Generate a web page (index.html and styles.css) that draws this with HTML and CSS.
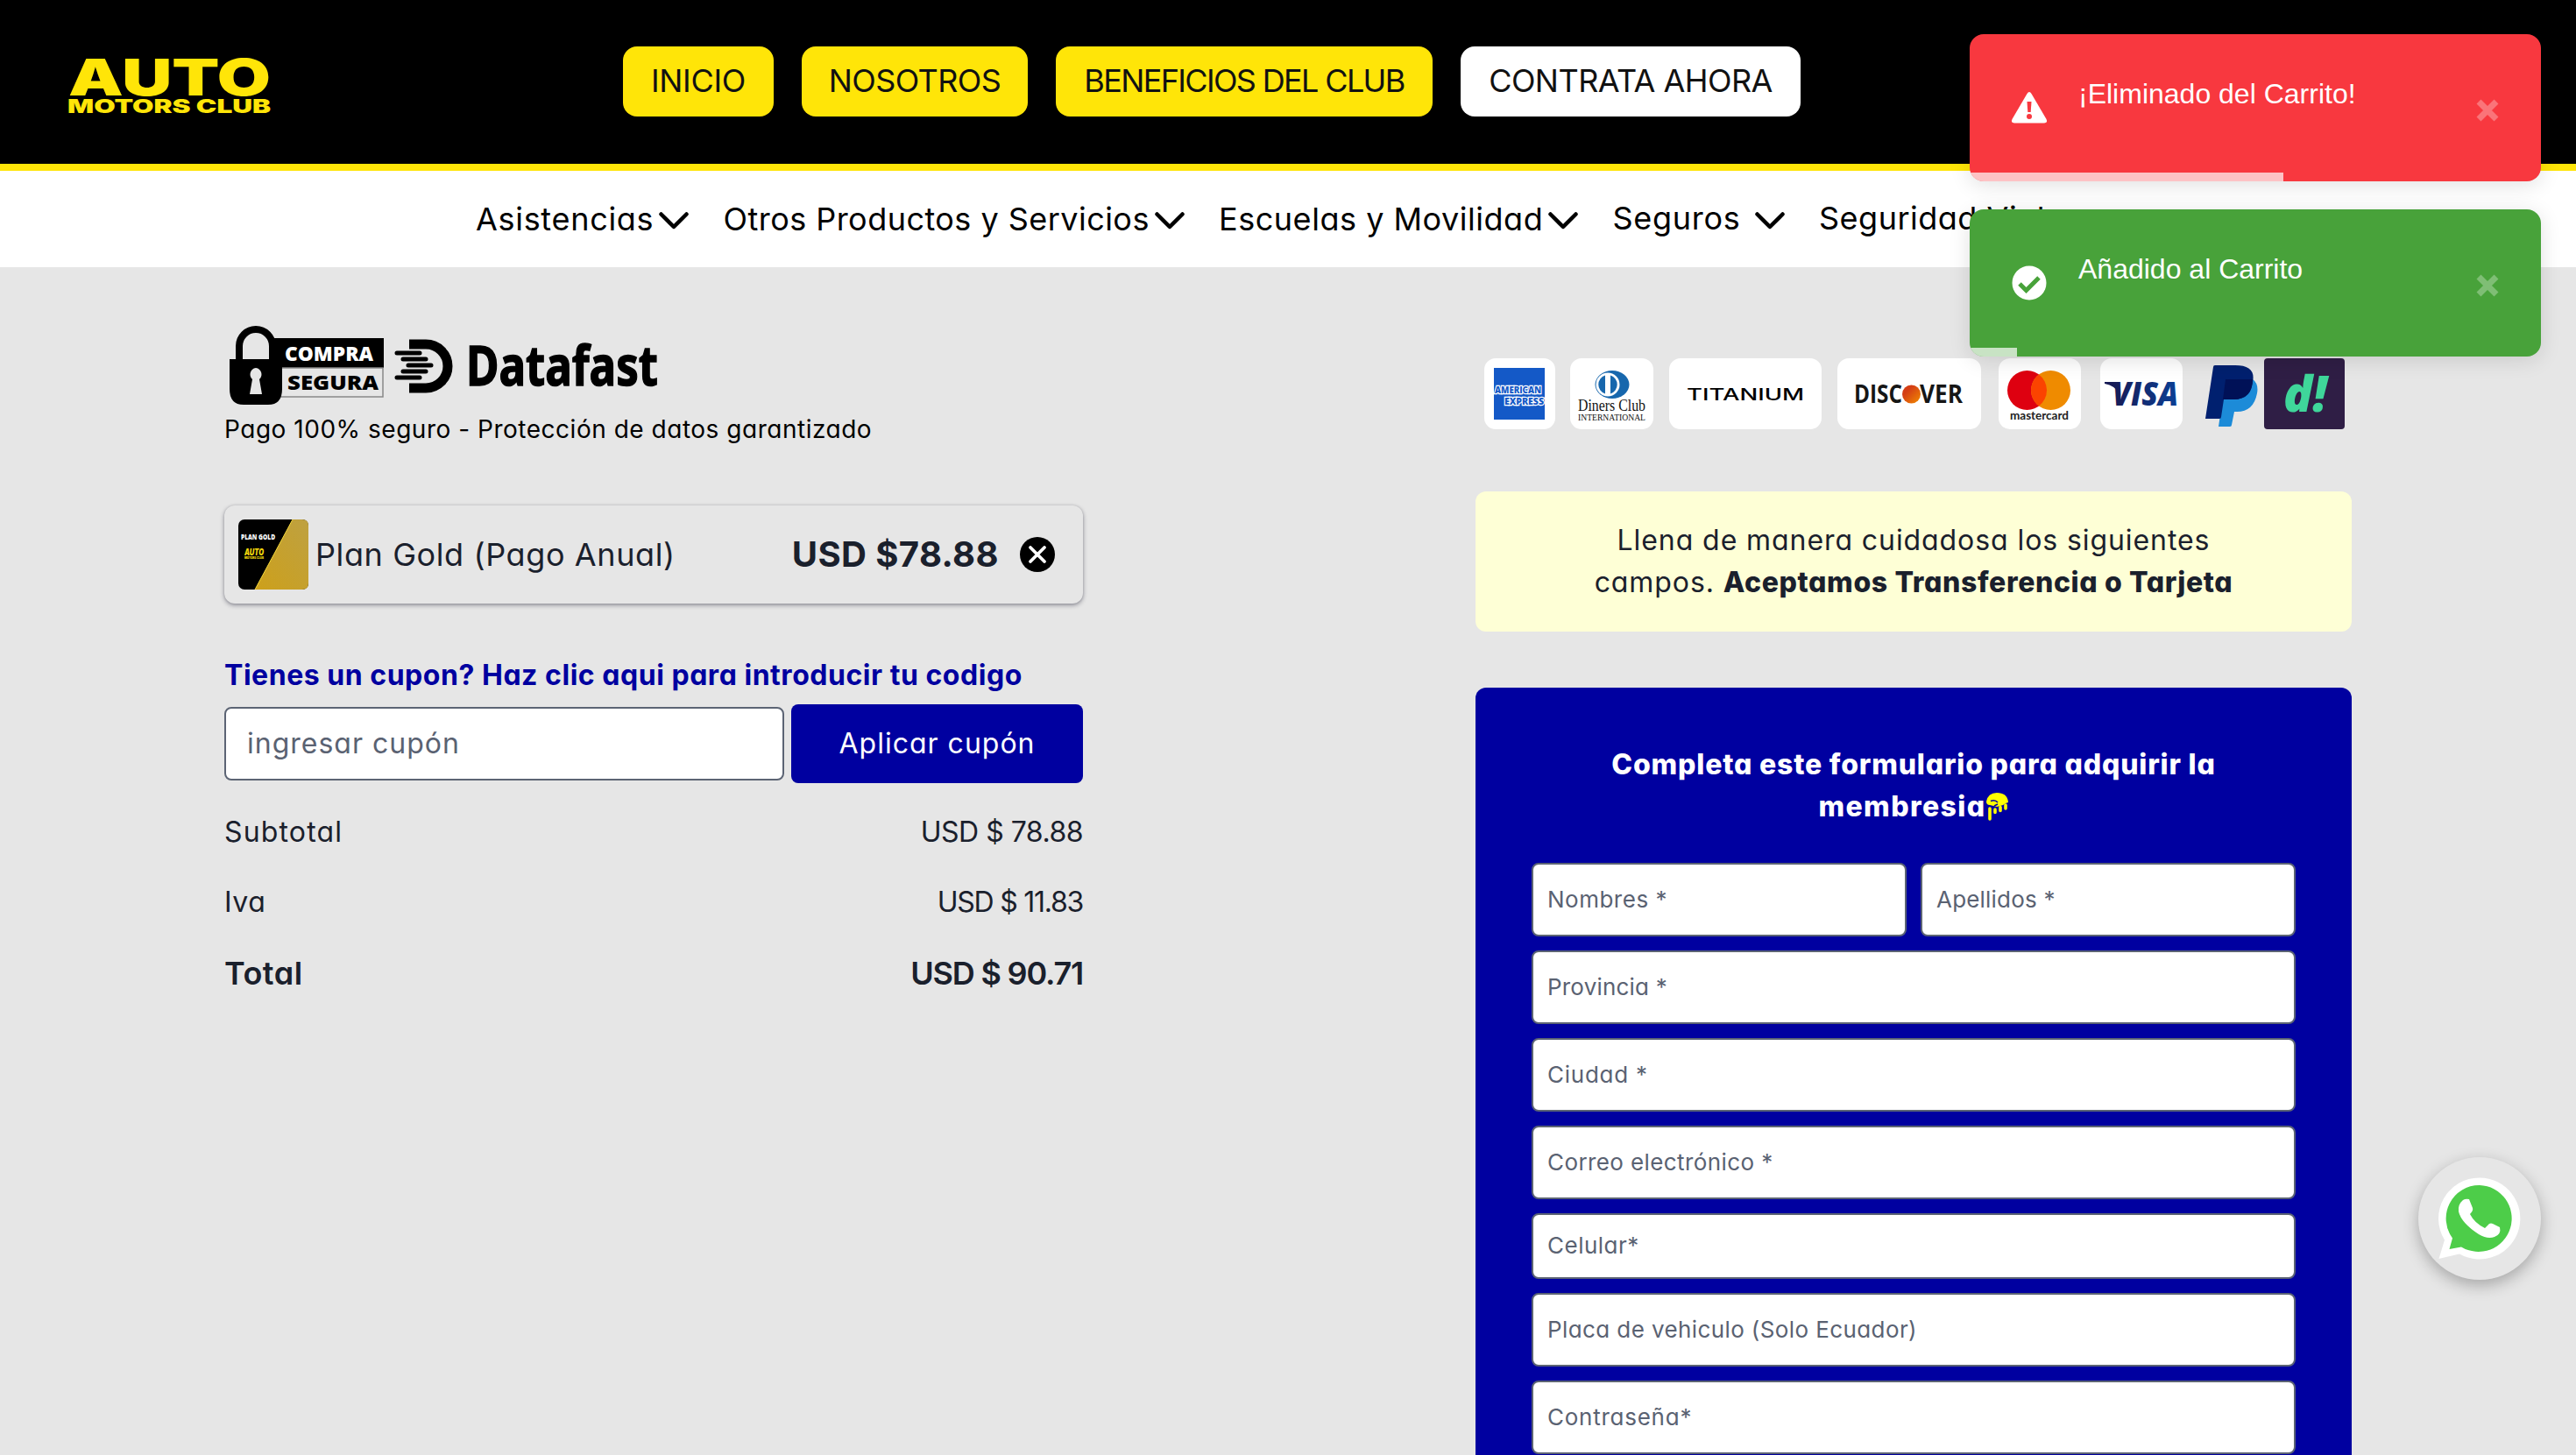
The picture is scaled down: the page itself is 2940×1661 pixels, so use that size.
FILE: index.html
```
<!DOCTYPE html>
<html lang="es">
<head>
<meta charset="utf-8">
<title>Auto Motors Club</title>
<link rel="stylesheet" href="styles.css">
</head>
<body>
<header class="header">
  <svg class="logo" viewBox="0 0 234 64" role="img">
    <g class="logo-text">
      <text x="1" y="43" font-size="58" textLength="231" lengthAdjust="spacingAndGlyphs">AUTO</text>
      <text x="0" y="63" font-size="22" textLength="232" lengthAdjust="spacingAndGlyphs">MOTORS CLUB</text>
    </g>
  </svg>
  <nav class="main-nav">
    <a class="pill w-ini"><span>INICIO</span></a>
    <a class="pill w-nos"><span>NOSOTROS</span></a>
    <a class="pill w-ben"><span>BENEFICIOS DEL CLUB</span></a>
    <a class="pill pill-white w-con"><span>CONTRATA AHORA</span></a>
  </nav>
</header>
<nav class="subnav">
  <a class="s-asi"><span>Asistencias</span><svg class="chev" viewBox="0 0 34 20"><path d="M2.500 2.500 17 17 31.500 2.500"/></svg></a>
  <a class="s-otr"><span>Otros Productos y Servicios</span><svg class="chev" viewBox="0 0 34 20"><path d="M2.500 2.500 17 17 31.500 2.500"/></svg></a>
  <a class="s-esc"><span>Escuelas y Movilidad</span><svg class="chev" viewBox="0 0 34 20"><path d="M2.500 2.500 17 17 31.500 2.500"/></svg></a>
  <a class="s-seg"><span>Seguros</span><svg class="chev" viewBox="0 0 34 20"><path d="M2.500 2.500 17 17 31.500 2.500"/></svg></a>
  <a class="s-via"><span>Seguridad Vial</span></a>
</nav>
<main class="page">
  <section class="cart">
    <svg class="secure" viewBox="0 0 500 92">
      <rect x="50" y="16" width="132" height="34"/>
      <rect x="50" y="50" width="131" height="33" fill="none" stroke="#888" stroke-width="1.500"/>
      <path d="M17 44V25a19 19 0 0 1 38 0v19" fill="#e6e6e6" stroke="#000" stroke-width="8"/>
      <path d="M6 40h60v34q0 18-16 18H22Q6 92 6 74z"/>
      <path d="M36 50a7.500 7.500 0 0 0-4 13l-3 17h14l-3-17a7.500 7.500 0 0 0-4-13z" fill="#e6e6e6"/>
      <g font-family="'Open Sans',sans-serif" font-weight="800" font-size="23">
        <text x="69" y="41.500" fill="#fff" textLength="101" lengthAdjust="spacingAndGlyphs">COMPRA</text>
        <text x="72" y="74.500" textLength="104" lengthAdjust="spacingAndGlyphs">SEGURA</text>
      </g>
      <path d="M211 23h19a25 25 0 0 1 0 50h-19" fill="none" stroke="#000" stroke-width="11"/>
      <path d="M197 33h26M204 40h26M210 47h26M204 54h26M197 61h26" stroke="#000" stroke-width="5" stroke-linecap="round"/>
      <text x="276" y="70" font-family="'Noto Sans',sans-serif" font-weight="700" font-size="63" stroke="#000" stroke-width="1.500" textLength="219" lengthAdjust="spacingAndGlyphs">Datafast</text>
    </svg>
    <p class="secure-note">Pago 100% seguro - Protección de datos garantizado</p>
    <div class="item">
      <svg class="thumb" viewBox="0 0 80 80">
        <defs><linearGradient id="gold" x1="0" y1="1" x2="1" y2="0"><stop offset="0" stop-color="#cda01a"/><stop offset="1" stop-color="#bea141"/></linearGradient></defs>
        <rect width="80" height="80" rx="7"/>
        <path d="M62 0h11q7 0 7 7v66q0 7-7 7H19z" fill="url(#gold)"/>
        <path d="M62 0 19 80" stroke="#f5d93a" stroke-width="1"/>
        <text x="3" y="23" fill="#fff" font-family="'Open Sans',sans-serif" font-weight="800" font-size="8.500" textLength="39" lengthAdjust="spacingAndGlyphs">PLAN GOLD</text>
        <g fill="#f4d90c" font-family="Inter,sans-serif" font-weight="900"><text x="7" y="41" font-size="10" textLength="22" lengthAdjust="spacingAndGlyphs" font-style="italic">AUTO</text><text x="7" y="44.500" font-size="3.500" textLength="22" lengthAdjust="spacingAndGlyphs">MOTORS CLUB</text></g>
      </svg>
      <span class="item-name">Plan Gold (Pago Anual)</span>
      <b class="item-price">USD $78.88</b>
      <svg class="remove" viewBox="0 0 40 40"><circle cx="20" cy="20" r="20"/><path d="M12 12 28 28M28 12 12 28" stroke="#fff" stroke-width="3.800" stroke-linecap="round"/></svg>
    </div>
    <p class="coupon-title">Tienes un cupon? Haz clic aqui para introducir tu codigo</p>
    <div class="coupon">
      <div class="coupon-input"><span>ingresar cupón</span></div>
      <button class="coupon-btn"><span>Aplicar cupón</span></button>
    </div>
    <div class="sum"><span class="t-sub">Subtotal</span><span class="t-v1">USD $ 78.88</span></div>
    <div class="sum"><span class="t-iva">Iva</span><span class="t-v2">USD $ 11.83</span></div>
    <div class="sum sum-total"><span class="t-tot">Total</span><span class="t-v3">USD $ 90.71</span></div>
  </section>
  <section class="checkout">
    <svg class="cards" viewBox="0 0 1000 84">
      <defs>
        <linearGradient id="orb" x1="0" y1="0" x2="1" y2="1"><stop offset="0.300" stop-color="#d43e16"/><stop offset="1" stop-color="#f28c00"/></linearGradient>
        <linearGradient id="visa"><stop offset="0" stop-color="#171b55"/><stop offset="1" stop-color="#0b4096"/></linearGradient>
      </defs>
      <g fill="#fff">
        <rect x="10" y="0" width="81" height="81" rx="13"/><rect x="108" y="0" width="95" height="81" rx="13"/><rect x="221" y="0" width="174" height="81" rx="13"/><rect x="413" y="0" width="164" height="81" rx="13"/><rect x="597" y="0" width="94" height="81" rx="13"/><rect x="713" y="0" width="94" height="81" rx="13"/>
      </g>
      <rect x="21" y="11" width="58" height="59" fill="#1459c7"/>
      <g fill="#1459c7" stroke="#fff" stroke-width="2.400" paint-order="stroke" font-family="'Open Sans',sans-serif" font-weight="800" font-size="11">
        <text x="22" y="39.500" textLength="53" lengthAdjust="spacingAndGlyphs">AMERICAN</text>
        <text x="33" y="52.500" textLength="45" lengthAdjust="spacingAndGlyphs">EXPRESS</text>
      </g>
      <ellipse cx="156" cy="30" rx="19.500" ry="16" fill="#1767ad"/><circle cx="151" cy="30" r="13.500" fill="#fff"/><path d="M148 19.500a11 11 0 0 0 0 21zM154 19.500a11 11 0 0 1 0 21z" fill="#1767ad"/>
      <g font-family="'Liberation Serif',serif" fill="#111">
        <text x="117" y="60" font-size="18" textLength="77" lengthAdjust="spacingAndGlyphs">Diners Club</text>
        <text x="117" y="70.500" font-size="10" textLength="77" lengthAdjust="spacingAndGlyphs">INTERNATIONAL</text>
      </g>
      <text x="241" y="48" font-family="Inter,sans-serif" font-weight="500" font-size="19" textLength="134" lengthAdjust="spacingAndGlyphs">TITANIUM</text>
      <g font-family="'Open Sans',sans-serif" font-weight="700" font-size="28" fill="#161616">
        <text x="432" y="51" textLength="55" lengthAdjust="spacingAndGlyphs">DISC</text>
        <text x="507" y="51" textLength="49" lengthAdjust="spacingAndGlyphs">VER</text>
      </g>
      <circle cx="497.500" cy="41" r="10.500" fill="url(#orb)"/>
      <circle cx="629.500" cy="36.500" r="22.500" fill="#de0010"/><circle cx="656.500" cy="36.500" r="22.500" fill="#ef8b00"/><path d="M643 18.500a22.500 22.500 0 0 1 0 36 22.500 22.500 0 0 1 0-36z" fill="#fb4300"/>
      <text x="610" y="70" font-family="Lato,sans-serif" font-weight="700" font-size="14" textLength="67" lengthAdjust="spacingAndGlyphs" fill="#222">mastercard</text>
      <path d="M718 27h13l3 5 1 9q-5-10-17-12z" fill="#171b55"/>
      <text x="727" y="53.500" font-family="'Open Sans',sans-serif" font-style="italic" font-weight="800" font-size="37" textLength="75" lengthAdjust="spacingAndGlyphs" fill="url(#visa)">VISA</text>
      <path d="M856 24h31q7 5 5 16-4 21-23 21h-3l-3 15q0 2-2 2h-13z" fill="#1c8bd8"/>
      <path d="M842 10q0-2 2-2h23q24 0 20 19-3 20-22 20h-11l-3 20q0 2-2 2h-16z" fill="#00206f"/>
      <path d="M856 24h31q0 23-22 23h-12z" fill="#001157"/>
      <rect x="900" y="0" width="92" height="81" rx="4" fill="#2f1e45"/>
      <text x="922" y="61" font-family="'Open Sans',sans-serif" font-style="italic" font-weight="800" font-size="56" textLength="50" lengthAdjust="spacingAndGlyphs" fill="#3fd69a">d!</text>
    </svg>
    <div class="notice"><p><span class="n1">Llena de manera cuidadosa los siguientes</span><br><span class="n2">campos. </span><b class="n3">Aceptamos Transferencia o Tarjeta</b></p></div>
    <form class="form">
      <h2 class="form-title"><span class="f1">Completa este formulario para adquirir la</span><br><span class="f2">membresia</span><svg class="hand" viewBox="0 0 26 32"><path d="M0 10Q2 0 12 0q12 0 13 11l-3 1-3 2-3 1-4 1-4-1-4-1q-4 0-4-4z"/><path d="M5 9.500q5-2 8 1.500M13 13l-4 2" fill="none" stroke="#0000a0" stroke-width="1.500"/><path d="M4 18v12M10 19v3.500M16 16.500v4M22 14v4" fill="none" stroke="#ff0" stroke-width="3.600" stroke-linecap="round"/></svg></h2>
      <div class="fields">
        <div class="field half"><span class="i1">Nombres *</span></div>
        <div class="field half"><span class="i2">Apellidos *</span></div>
        <div class="field"><span class="i2">Provincia *</span></div>
        <div class="field"><span class="i4">Ciudad *</span></div>
        <div class="field"><span class="i5">Correo electrónico *</span></div>
        <div class="field short"><span class="i1">Celular*</span></div>
        <div class="field"><span class="i5">Placa de vehiculo (Solo Ecuador)</span></div>
        <div class="field"><span class="i4">Contraseña*</span></div>
      </div>
    </form>
  </section>
</main>
<aside class="toasts">
  <div class="toast toast-error">
    <svg class="toast-icon" viewBox="0 0 40 40"><path d="M17.500 4q2.500-4 5 0l17 29q2 4-2.500 4.500H3Q-1.500 37 .5 33z" fill="#fff"/><path d="M17.500 13h5l-.8 12h-3.400z" fill="#f8383f"/><circle cx="20" cy="30" r="3" fill="#f8383f"/></svg>
    <p>¡Eliminado del Carrito!</p>
    <svg class="toast-close" viewBox="0 0 26 26"><path d="M3 3 23 23M23 3 3 23"/></svg>
    <i class="bar" style="width:358px"></i>
  </div>
  <div class="toast toast-ok">
    <svg class="toast-icon" viewBox="0 0 40 40"><circle cx="20" cy="20" r="19.500" fill="#fff"/><path d="M9 21l7.500 7.500L31 14" fill="none" stroke="#48a23a" stroke-width="5"/></svg>
    <p>Añadido al Carrito</p>
    <svg class="toast-close" viewBox="0 0 26 26"><path d="M3 3 23 23M23 3 3 23"/></svg>
    <i class="bar" style="width:54px"></i>
  </div>
</aside>
<a class="whatsapp">
  <svg viewBox="0 0 94 94"><path d="M47 .5A46.500 46.500 0 1 1 24 87.500L.5 93 7 71.500A46.500 46.500 0 0 1 47 .5z" fill="#fff"/><path d="M47 9A38 38 0 1 1 26 79.500L12.500 82 16 69.500A38 38 0 0 1 47 9z" fill="#4dcd49"/><path d="M28 26q3-2 7-1l4 10q1 3-3 7 5 10 17 16l5-5q2-1 4 0l8 4q2 8-6 11-8 3-18-3Q26 52 23 39q-1-8 5-13z" fill="#fff"/></svg>
</a>
</body>
</html>
```
FILE: styles.css
```
* { box-sizing: border-box; }
body { margin: 0; height: 1661px; overflow: hidden; background: #e6e6e6; color: #1a202c; font-family: Inter, "Open Sans", sans-serif; font-feature-settings: "cv11"; font-size: 32px; line-height: 48px; }
p, h2 { margin: 0; }
span, b, p { white-space: nowrap; }
svg { display: block; flex: none; overflow: visible; }

.header { height: 195px; background: #000; border-bottom: 8px solid #ffe508; padding: 53px 0 0 77px; display: flex; align-items: flex-start; }
.logo { width: 234px; height: 64px; margin-top: 13px; }
.logo-text { fill: #ffe508; font-family: Inter, sans-serif; font-weight: 900; }
.main-nav { display: flex; gap: 32px; margin-left: 400px; font-size: 36px; line-height: 78px; }
.pill { height: 80px; border-radius: 16px; background: #ffe508; color: #111; display: flex; justify-content: center; }
.pill-white { background: #fff; }
.w-ini { width: 172px; letter-spacing: -.3px; }
.w-nos { width: 258px; letter-spacing: -.6px; }
.w-ben { width: 430px; letter-spacing: -1.65px; }
.w-con { width: 388px; letter-spacing: -.55px; }

.subnav { height: 110px; background: #fff; color: #000; padding-left: 543px; display: flex; font-size: 36px; line-height: 110px; }
.subnav a { display: flex; align-items: center; justify-content: space-between; margin-right: 39.500px; }
.chev { width: 34px; height: 20px; margin-top: 4px; fill: none; stroke: #000; stroke-width: 4.500; stroke-linecap: round; stroke-linejoin: round; }
.s-asi { width: 243px; letter-spacing: .7px; }
.s-otr { width: 526px; letter-spacing: .46px; }
.s-esc { width: 410px; letter-spacing: .53px; }
.s-seg { width: 196px; letter-spacing: .7px; }
.s-via { letter-spacing: .5px; }
.subnav .s-seg span, .subnav .s-via span { margin-top: -3px; }

.page { padding: 0 256px; display: flex; justify-content: space-between; }
.cart { width: 980px; padding-top: 65px; }
.secure { width: 500px; height: 92px; }
.secure-note { font-size: 28px; line-height: 42px; margin-top: 7px; color: #000; letter-spacing: .52px; }
.item { margin-top: 66px; height: 112px; border-radius: 12px; padding: 0 32px 0 16px; display: flex; align-items: center; box-shadow: 0 2px 5px rgba(40,40,60,.45), 0 0 3px rgba(0,0,0,.12); }
.thumb { width: 80px; height: 80px; }
.item-name { font-size: 36px; margin-left: 8px; letter-spacing: .6px; }
.item-price { font-size: 40px; margin-left: auto; letter-spacing: .4px; }
.remove { width: 40px; height: 40px; margin-left: 24px; }
.coupon-title { margin-top: 58px; color: #0000a0; font-weight: 700; letter-spacing: .530px; }
.coupon { margin-top: 9px; display: flex; gap: 8px; align-items: center; }
.coupon-input, .field { background: #fff; border: 2px solid #5c6474; border-radius: 8px; color: #5a6272; display: flex; align-items: center; }
.coupon-input { width: 639px; height: 84px; padding-left: 24px; letter-spacing: 1px; }
.coupon-btn { width: 333px; height: 90px; border: 0; border-radius: 8px; background: #0000a0; color: #fff; font: inherit; font-feature-settings: inherit; letter-spacing: 1px; padding: 0; text-align: center; }
.sum { display: flex; justify-content: space-between; margin-top: 32px; }
.sum-total { font-size: 36px; font-weight: 600; margin-top: 33px; }
.t-sub { letter-spacing: 1.150px; }
.t-iva { letter-spacing: .6px; }
.t-tot { letter-spacing: .5px; }
.t-v1 { letter-spacing: -.5px; }
.t-v2 { letter-spacing: -1.250px; }
.t-v3 { letter-spacing: -1.200px; }

.checkout { width: 1000px; padding-top: 104px; }
.cards { width: 1000px; height: 84px; }
.notice { margin-top: 68px; height: 160px; background: #feffd6; border-radius: 12px; text-align: center; padding-top: 32px; }
.n1, .n2 { letter-spacing: .92px; }
.n3 { font-weight: 800; letter-spacing: .620px; }
.form { margin-top: 64px; height: 876px; background: #0000a0; border-radius: 12px 12px 0 0; padding: 64px 64px 0; }
.form-title { font-size: 32px; line-height: 48px; font-weight: 800; color: #fff; text-align: center; }
.f1 { letter-spacing: .820px; }
.f2 { letter-spacing: 1.400px; }
.hand { display: inline-block; width: 26px; height: 32px; vertical-align: -5px; margin-top: -8px; fill: #ff0; }
.fields { margin-top: 40px; display: flex; flex-wrap: wrap; gap: 16px; font-size: 26px; }
.field { width: 872px; height: 84px; padding-left: 16px; padding-bottom: 1px; }
.half { width: 428px; }
.short { height: 75px; padding-bottom: 2px; }
.i1 { letter-spacing: .5px; }
.i2 { letter-spacing: .2px; }
.i4 { letter-spacing: .75px; }
.i5 { letter-spacing: .4px; }

.toasts { position: absolute; top: 39px; right: 40px; display: flex; flex-direction: column; gap: 32px; font-family: "Liberation Sans", sans-serif; }
.toast { position: relative; width: 652px; height: 168px; border-radius: 16px; overflow: hidden; color: #fff; display: flex; align-items: center; padding: 0 48px; box-shadow: 0 4px 24px rgba(0,0,0,.12); }
.toast-error { background: #f8383f; }
.toast-ok { background: #48a23a; }
.toast-icon { width: 40px; height: 40px; }
.toast p { margin: -33px auto 0 36px; }
.toast-close { width: 26px; height: 26px; margin-top: 6px; fill: none; stroke: #fff; stroke-width: 7; opacity: .3; }
.bar { position: absolute; left: 0; bottom: 0; height: 10px; background: rgba(255,255,255,.7); }

.whatsapp { position: absolute; left: 2760px; top: 1321px; width: 140px; height: 140px; border-radius: 50%; background: #e6e6e6; box-shadow: 0 6px 18px rgba(0,0,0,.28); display: flex; align-items: center; justify-content: center; }
.whatsapp svg { width: 94px; height: 94px; }
```
